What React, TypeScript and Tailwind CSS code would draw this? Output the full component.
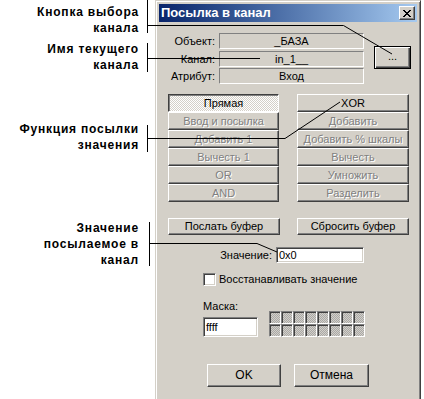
import React from "react";

const raised =
  "bg-[#d4d0c8] border border-t-white border-l-white border-r-[#404040] border-b-[#404040] shadow-[inset_-1px_-1px_#808080]";
const sunkenThin = "border border-t-[#808080] border-l-[#808080] border-r-white border-b-white";
const sunkenDeep =
  "bg-white border border-t-[#808080] border-l-[#808080] border-r-white border-b-white shadow-[inset_1px_1px_#404040,inset_-1px_-1px_#d4d0c8]";
const dither =
  "bg-[conic-gradient(#fff_25%,#d4d0c8_0_50%,#fff_0_75%,#d4d0c8_0)] bg-[length:2px_2px]";
const cellDither =
  "bg-[conic-gradient(#d4d0c8_25%,#a8a8a8_0_50%,#d4d0c8_0_75%,#a8a8a8_0)] bg-[length:2px_2px]";
const disabledText = "text-[#808080] [text-shadow:1px_1px_0_#fff]";

const leftOps = ["Прямая", "Ввод и посылка", "Добавить 1", "Вычесть 1", "OR", "AND"];
const rightOps = ["XOR", "Добавить", "Добавить % шкалы", "Вычесть", "Умножить", "Разделить"];

function OpButton({ label, active, enabled }: { label: string; active?: boolean; enabled?: boolean }) {
  if (active) {
    return (
      <div
        className={`h-[18px] flex items-center justify-center border border-t-[#404040] border-l-[#404040] border-r-white border-b-white shadow-[inset_1px_1px_#808080] ${dither}`}
      >
        {label}
      </div>
    );
  }
  return (
    <div className={`h-[18px] flex items-center justify-center ${raised} ${enabled ? "text-black" : disabledText}`}>
      {label}
    </div>
  );
}

function Annotation({ lines, className }: { lines: string[]; className?: string }) {
  return (
    <div className={`text-right font-bold text-[12px] leading-[16px] tracking-[0.8px] ${className ?? ""}`}>
      {lines.map((l) => (
        <div key={l}>{l}</div>
      ))}
    </div>
  );
}

export default function App() {
  return (
    <div className="relative w-[424px] h-[399px] overflow-hidden bg-white flex font-['Liberation_Sans',Arial,sans-serif] text-black">
      {/* callouts */}
      <div className="w-[139px] shrink-0 flex flex-col">
        <Annotation className="mt-[4px]" lines={["Кнопка выбора", "канала"]} />
        <Annotation className="mt-[5px]" lines={["Имя текущего", "канала"]} />
        <Annotation className="mt-[48px]" lines={["Функция посылки", "значения"]} />
        <Annotation className="mt-[67px]" lines={["Значение", "посылаемое в", "канал"]} />
      </div>

      {/* dialog */}
      <div className="ml-[16px] w-[266px] h-[410px] shrink-0 bg-[#d4d0c8] border border-t-[#d4d0c8] border-l-[#d4d0c8] border-r-[#404040] border-b-[#404040] shadow-[inset_1px_1px_white,inset_-1px_-1px_#808080] p-[3px] text-[11px] leading-[13px]">
        <div className="h-[18px] flex items-center bg-linear-to-r from-[#0a246a] to-[#a6caf0] pl-[2px] pr-[2px]">
          <span className="text-white font-bold text-[13px] leading-[16px]">Посылка в канал</span>
          <div className={`ml-auto w-[16px] h-[14px] flex items-center justify-center ${raised}`}>
            <svg width="8" height="7" viewBox="0 0 8 7" shapeRendering="crispEdges">
              <path d="M0 0h2v1H0zM6 0h2v1H6zM1 1h2v1H1zM5 1h2v1H5zM2 2h4v1H2zM3 3h2v1H3zM2 4h4v1H2zM1 5h2v1H1zM5 5h2v1H5zM0 6h2v1H0zM6 6h2v1H6z" fill="#000" />
            </svg>
          </div>
        </div>

        {/* channel fields */}
        <div className="mt-[11px] flex items-start">
          <div className="flex flex-col">
            {[
              ["Объект:", "_БАЗА"],
              ["Канал:", "in_1__"],
              ["Атрибут:", "Вход"],
            ].map(([label, value], i) => (
              <div key={label} className={`flex items-center ${i === 1 ? "mt-[2px]" : i === 2 ? "mt-[1px]" : ""}`}>
                <div className="w-[56px] text-right">{label}</div>
                <div className={`ml-[4px] w-[145px] h-[16px] flex items-center justify-center ${sunkenThin}`}>{value}</div>
              </div>
            ))}
          </div>
          <div className="ml-[10px] mt-[13px] w-[37px] h-[23px] border border-black">
            <div className="w-full h-full flex items-center justify-center pb-[2px] shadow-[inset_1px_1px_white,inset_-1px_-1px_#404040,inset_-2px_-2px_#808080]">
              ...
            </div>
          </div>
        </div>

        {/* operations */}
        <div className="mt-[10px] ml-[9px] flex">
          <div className="w-[111px] flex flex-col">
            {leftOps.map((op, i) => (
              <OpButton key={op} label={op} active={i === 0} />
            ))}
          </div>
          <div className="ml-[18px] w-[112px] flex flex-col">
            {rightOps.map((op, i) => (
              <OpButton key={op} label={op} enabled={i === 0} />
            ))}
          </div>
        </div>

        {/* buffer buttons */}
        <div className="mt-[16px] ml-[9px] flex">
          <div className={`w-[112px] h-[17px] flex items-center justify-center ${raised}`}>Послать буфер</div>
          <div className={`ml-[17px] w-[112px] h-[17px] flex items-center justify-center ${raised}`}>Сбросить буфер</div>
        </div>

        {/* value */}
        <div className="mt-[12px] flex items-center">
          <div className="w-[113px] text-right">Значение:</div>
          <div className={`ml-[4px] w-[88px] h-[16px] flex items-center pl-[2px] ${sunkenDeep}`}>0x0</div>
        </div>

        {/* restore checkbox */}
        <div className="mt-[10px] ml-[44px] flex items-center">
          <div className={`w-[13px] h-[13px] ${sunkenDeep}`} />
          <span className="ml-[3px]">Восстанавливать значение</span>
        </div>

        {/* mask */}
        <div className="mt-[14px] ml-[44px] flex items-end">
          <div className="flex flex-col">
            <span>Маска:</span>
            <div className={`mt-[4px] w-[55px] h-[20px] flex items-center pl-[2px] ${sunkenDeep}`}>ffff</div>
          </div>
          <div className="ml-[11px] grid grid-cols-8 w-[96px] h-[26px]">
            {Array.from({ length: 16 }).map((_, i) => (
              <div
                key={i}
                className={`w-[12px] h-[13px] border border-t-[#808080] border-l-[#808080] border-r-white border-b-white shadow-[inset_1px_1px_#404040] ${cellDither}`}
              />
            ))}
          </div>
        </div>

        {/* dialog buttons */}
        <div className="mt-[27px] ml-[48px] flex">
          <div className={`w-[74px] h-[23px] flex items-center justify-center text-[12px] ${raised}`}>OK</div>
          <div className={`ml-[13px] w-[75px] h-[23px] flex items-center justify-center text-[12px] ${raised}`}>Отмена</div>
        </div>
      </div>

      {/* leader lines */}
      <svg
        className="absolute inset-0 pointer-events-none"
        width="424"
        height="399"
        viewBox="0 0 424 399"
        fill="none"
        stroke="#000"
        strokeWidth="1"
      >
        <path d="M147.5 0V33" shapeRendering="crispEdges" />
        <path d="M147.5 25.5H343.5L392 54" />
        <path d="M147.5 43V72" shapeRendering="crispEdges" />
        <path d="M147.5 58.5H260" shapeRendering="crispEdges" />
        <path d="M147.5 125V152" shapeRendering="crispEdges" />
        <path d="M147.5 138.5H285L340 102" />
        <path d="M149.5 222V266" shapeRendering="crispEdges" />
        <path d="M149.5 243.5H257L277 252" />
      </svg>
    </div>
  );
}
